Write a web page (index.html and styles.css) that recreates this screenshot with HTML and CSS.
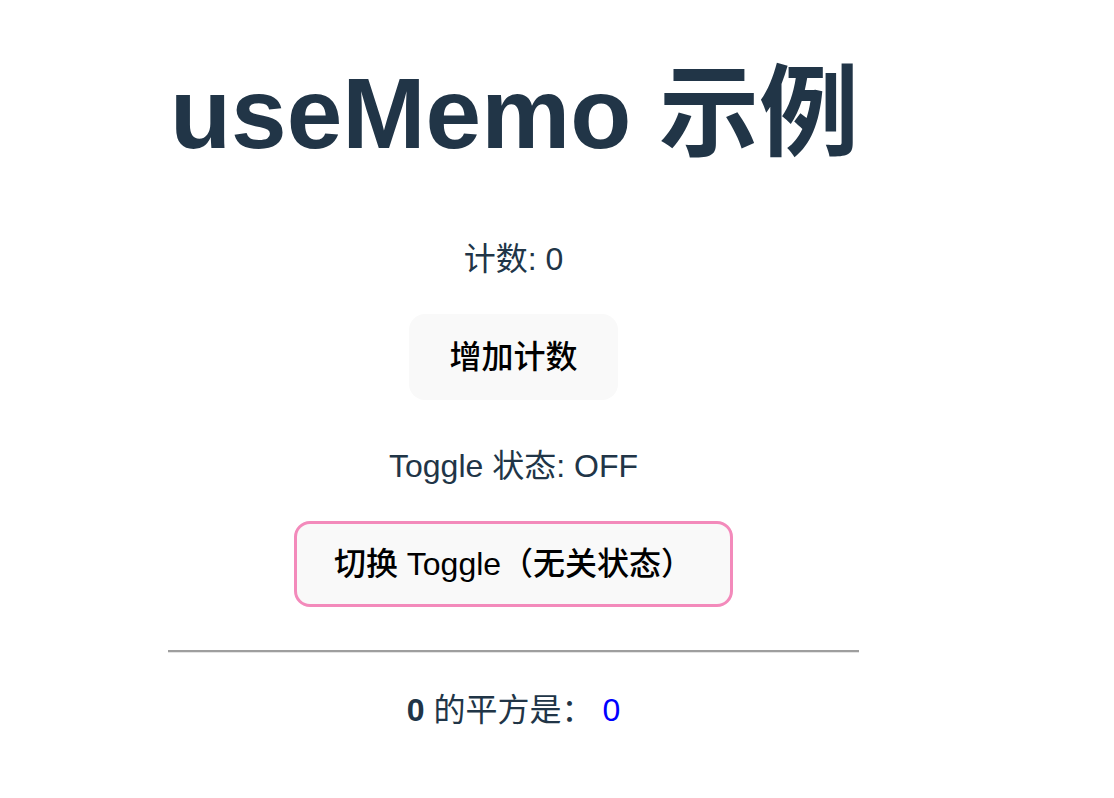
FILE: index.html
```html
<!DOCTYPE html>
<html lang="zh">
<head>
<meta charset="utf-8">
<title>useMemo 示例</title>
<link rel="stylesheet" href="styles.css">
</head>
<body>
<div class="app">
  <h1 class="title">useMemo 示例</h1>
  <p class="line line-count">计数: 0</p>
  <button class="btn btn-count" type="button">增加计数</button>
  <p class="line line-toggle">Toggle 状态: OFF</p>
  <button class="btn btn-toggle" type="button">切换 Toggle（无关状态）</button>
  <hr class="divider">
  <p class="line line-result"><strong>0</strong> 的平方是： <span class="value">0</span></p>
</div>
</body>
</html>
```

FILE: styles.css
```css
html, body {
  margin: 0;
  padding: 0;
  background: #ffffff;
}

body {
  font-family: "Liberation Sans", "Noto Sans CJK SC", sans-serif;
  font-size: 32px;
  line-height: 48px;
  color: #213547;
}

.app {
  width: 691px;
  margin-left: 168px;
  padding-top: 58px;
  display: flex;
  flex-direction: column;
  align-items: center;
  text-align: center;
}

.title {
  align-self: stretch;
  text-align: left;
  margin: 0 0 67px 2px;
  font-size: 100px;
  line-height: 110px;
  font-weight: 700;
  color: #213547;
  white-space: nowrap;
}

.line {
  margin: 0 0 31px;
}

.btn {
  box-sizing: border-box;
  height: 86px;
  border-radius: 16px;
  background: #f9f9f9;
  color: #000000;
  font-family: "Liberation Sans", "Noto Sans CJK SC", sans-serif;
  font-size: 32px;
  font-weight: 500;
  line-height: 1;
  margin: 0 0 42px;
  cursor: pointer;
}

.btn-count {
  border: 2px solid transparent;
  padding: 0 38px;
}

.btn-toggle {
  border: 3px solid #f38abb;
  padding: 0 37px;
}

.divider {
  align-self: stretch;
  box-sizing: border-box;
  height: 3px;
  margin: 1px 0 33px;
  border: 0;
  border-top: 2px solid #9e9e9e;
  border-bottom: 1px solid #e4e4e4;
}

.line-result {
  margin: 0;
}

.line-result strong {
  font-weight: 700;
}

.value {
  color: #0000ff;
}
```
